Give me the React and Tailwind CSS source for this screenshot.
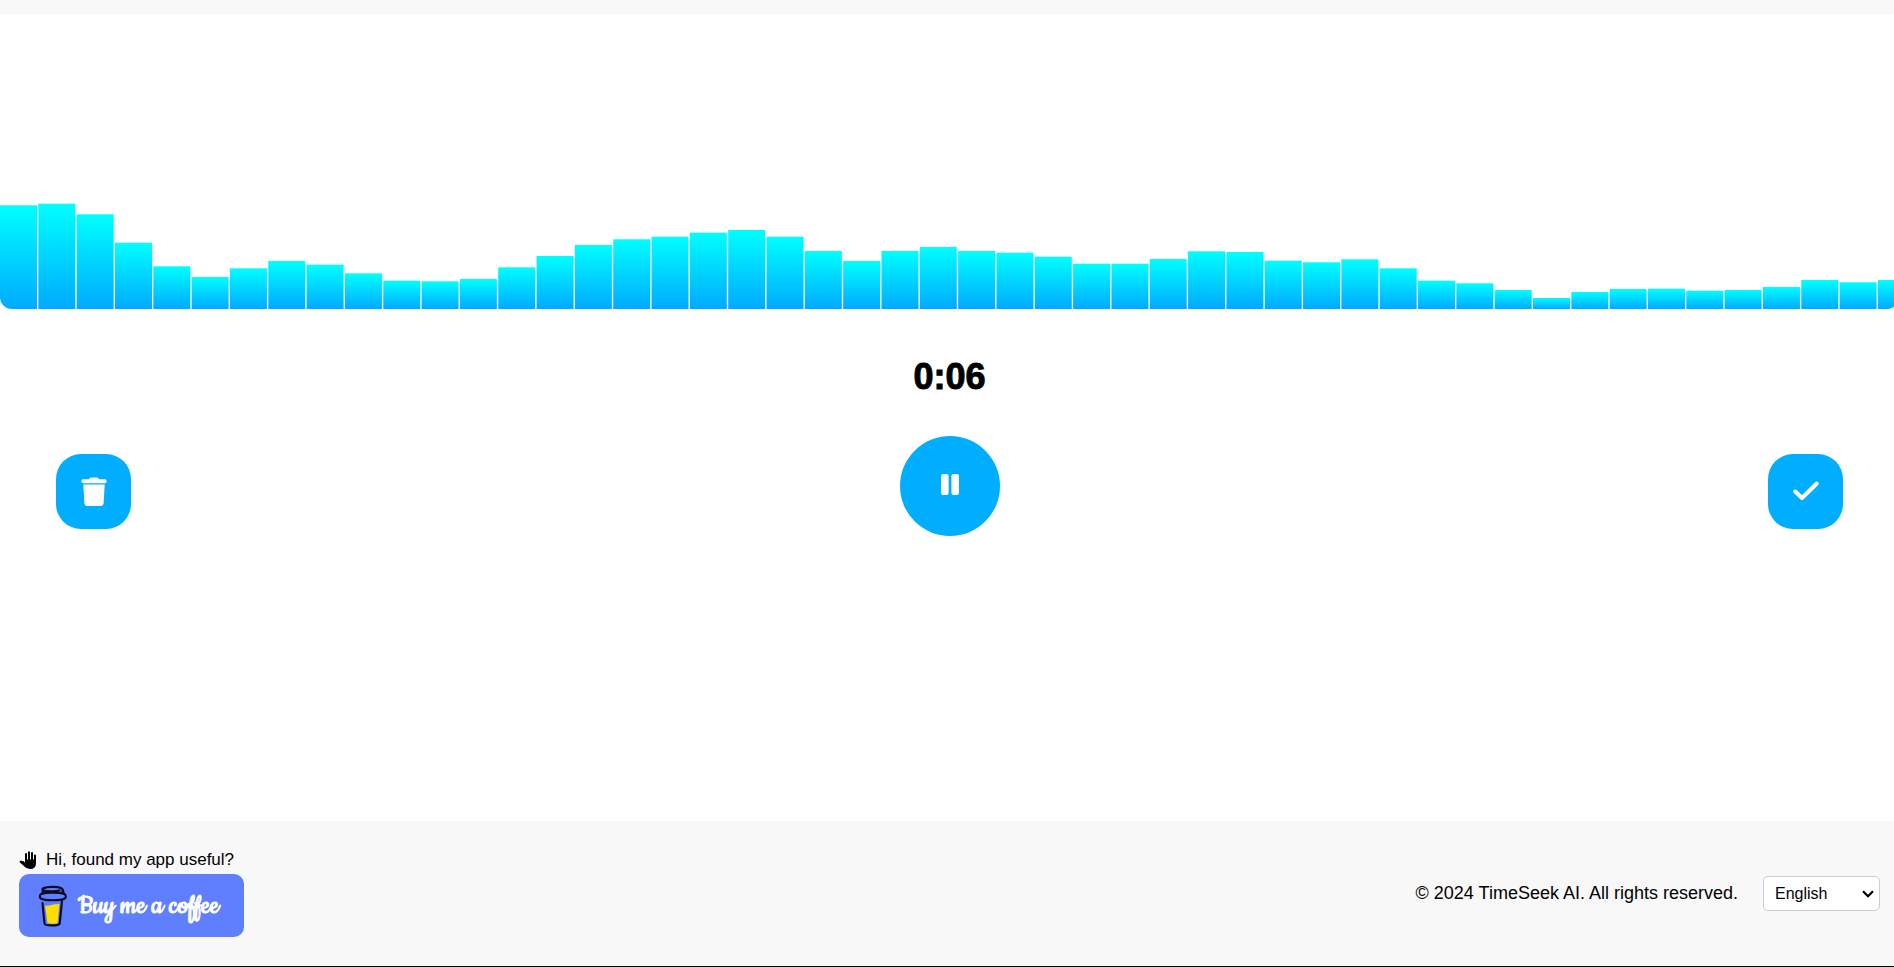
import React, { useState } from "react";

const levels = [
  103.7, 105.3, 94.7, 66.3, 42.7, 32, 40.7, 48, 44.3, 35.7, 28.3, 27.7, 30, 41.7, 53, 64, 69.7,
  72.3, 76.3, 79, 72.3, 58, 48, 58, 62, 58, 56.3, 52.3, 45.3, 45.3, 50, 57.7, 57,
  48.3, 46.7, 49.7, 40.7, 28.3, 25.7, 19, 11, 17, 20, 20.3, 18.3, 19, 22, 29, 26.7, 29,
];

const BAR_STEP = 38.325;
const BAR_WIDTH = 37;

function Waveform() {
  return (
    <svg
      viewBox="0 0 1899 295"
      preserveAspectRatio="none"
      className="block w-full h-[295px] rounded-xl"
      aria-hidden="true"
    >
      <defs>
        <linearGradient id="bar" x1="0" y1="0" x2="0" y2="1">
          <stop offset="0" stopColor="#00ffff" />
          <stop offset="1" stopColor="#00aaff" />
        </linearGradient>
      </defs>
      {levels.map((h, i) => (
        <rect key={i} x={i * BAR_STEP} y={295 - h} width={BAR_WIDTH} height={h} fill="url(#bar)" />
      ))}
    </svg>
  );
}

function TrashIcon() {
  return (
    <svg viewBox="0 0 26 30" className="w-[26px] h-[30px]" fill="#fff" aria-hidden="true">
      <path d="M2 3.2h6.2c.3-1.1 1-1.7 2.2-1.7h5.2c1.2 0 1.9.6 2.2 1.7H24a1.6 1.6 0 0 1 1.6 1.6v.8A1.6 1.6 0 0 1 24 7.200H2A1.6 1.6 0 0 1 .4 5.600v-.8A1.6 1.6 0 0 1 2 3.200z" />
      <path d="M2.300 8.600h21.400l-1.100 19a2.600 2.600 0 0 1-2.600 2.400H6a2.600 2.600 0 0 1-2.600-2.400z" />
    </svg>
  );
}

function CheckIcon() {
  return (
    <svg viewBox="0 0 26 20" className="w-[26px] h-5" fill="none" stroke="#fff" strokeWidth="4" strokeLinecap="round" strokeLinejoin="round" aria-hidden="true">
      <path d="M2.300 10.500l6.700 6.500L23.700 2.500" />
    </svg>
  );
}

function PauseIcon() {
  return (
    <svg viewBox="0 0 18 21" className="w-[18px] h-[21px] mb-1" fill="#fff" aria-hidden="true">
      <rect x="0" y="0" width="7.600" height="21" rx="2.200" />
      <rect x="10.400" y="0" width="7.600" height="21" rx="2.200" />
    </svg>
  );
}

function HandIcon() {
  return (
    <svg viewBox="0 0 18 18" className="w-[18px] h-[18px]" fill="none" stroke="currentColor" strokeWidth="2" strokeLinecap="round" strokeLinejoin="round" aria-hidden="true">
      <path d="M7 10V3M10 10V1.300M13 10V2M16 10V4.500" />
      <path d="M1.600 10.700l2.300.4L7 13.500V9.500h9V12c0 3-2 5-5 5-2.600 0-4-1-5.200-2.400z" fill="currentColor" />
    </svg>
  );
}

function CoffeeCup() {
  return (
    <svg viewBox="0 0 30 42" className="w-[30px] h-[42px] shrink-0" fill="none" stroke="#0d0c23" strokeWidth="2.200" strokeLinecap="round" strokeLinejoin="round" aria-hidden="true">
      <path d="M7 20.500c4 1 9-1.800 14.400-1.500l-1.900 19c-2.500.9-7 .9-10 0z" fill="#ffdd00" stroke="none" />
      <path d="M21.500 5.500c-3 1-13.500 1.100-16.500-.3C3 4 6 2 14 1.800S26 3.500 24.500 6.500" />
      <path d="M3.500 8.800c5-1.600 18-1.600 22.500 0 2 .8 2.400 3.800.8 4.700-4 2.300-20 2.300-24 0C1.300 12.500 1.600 9.500 3.500 8.800z" />
      <path d="M5 5.500l-.5 3M25 5.500l.7 3M4.500 18l2 20.500c.2 2.500 14.800 2.500 15.200 0L24 16" />
    </svg>
  );
}

function RoundButton({ label, children }) {
  return (
    <button
      type="button"
      aria-label={label}
      className="flex items-center justify-center w-[75px] h-[75px] rounded-[25px] bg-[#00aeff] mt-2.5"
    >
      {children}
    </button>
  );
}

function App() {
  const [language, setLanguage] = useState("en");

  return (
    <div className="min-h-screen flex flex-col bg-white text-black border-b border-black font-['Liberation_Sans',Arial,sans-serif]">
      <header className="h-3.5 bg-[#f8f8f8]" />

      <main className="flex-1 overflow-hidden">
        {/* the recorder runs slightly past the right edge */}
        <div className="w-[calc(100%+5px)]">
          <Waveform />

          <section className="px-14 pt-12">
            <p className="text-center text-4xl leading-10 font-bold [-webkit-text-stroke:1px_black]">0:06</p>
            <div className="flex items-center justify-between mt-[39px]">
              <RoundButton label="Delete recording">
                <TrashIcon />
              </RoundButton>
              <button
                type="button"
                aria-label="Pause"
                className="flex items-center justify-center w-[100px] h-[100px] rounded-full bg-[#00aeff]"
              >
                <PauseIcon />
              </button>
              <RoundButton label="Finish recording">
                <CheckIcon />
              </RoundButton>
            </div>
          </section>
        </div>
      </main>

      <footer className="flex items-center justify-between h-[145px] bg-[#f8f8f8] pl-[19px] pr-3.5">
        <div className="pb-1">
          <p className="flex items-center gap-[9px] text-[17px] leading-7">
            <HandIcon />
            Hi, found my app useful?
          </p>
          <a
            href="#coffee"
            className="flex items-center gap-2.5 w-[225px] h-[63px] pl-[19px] rounded-[10px] bg-[#5f7fff] text-white text-[30px] leading-8 whitespace-nowrap font-['Cookie',cursive] [-webkit-text-stroke:1px_white]"
          >
            <CoffeeCup />
            Buy me a coffee
          </a>
        </div>
        <div className="flex items-center gap-[25px]">
          <p className="text-lg pb-0.5">© 2024 TimeSeek AI. All rights reserved.</p>
          <div className="relative">
            <select
              aria-label="Language"
              value={language}
              onChange={(e) => setLanguage(e.target.value)}
              className="block appearance-none w-[117px] h-[35px] px-[11px] rounded-[5px] border border-[#ccc] bg-white text-base"
            >
              <option value="en">English</option>
              <option value="es">Español</option>
              <option value="fr">Français</option>
            </select>
            <svg viewBox="0 0 12 8" className="absolute right-1.5 top-3.5 w-3 h-2 pointer-events-none" fill="none" stroke="#000" strokeWidth="2.200" aria-hidden="true">
              <path d="M1 1.200l5 5 5-5" />
            </svg>
          </div>
        </div>
      </footer>
    </div>
  );
}

export default App;
